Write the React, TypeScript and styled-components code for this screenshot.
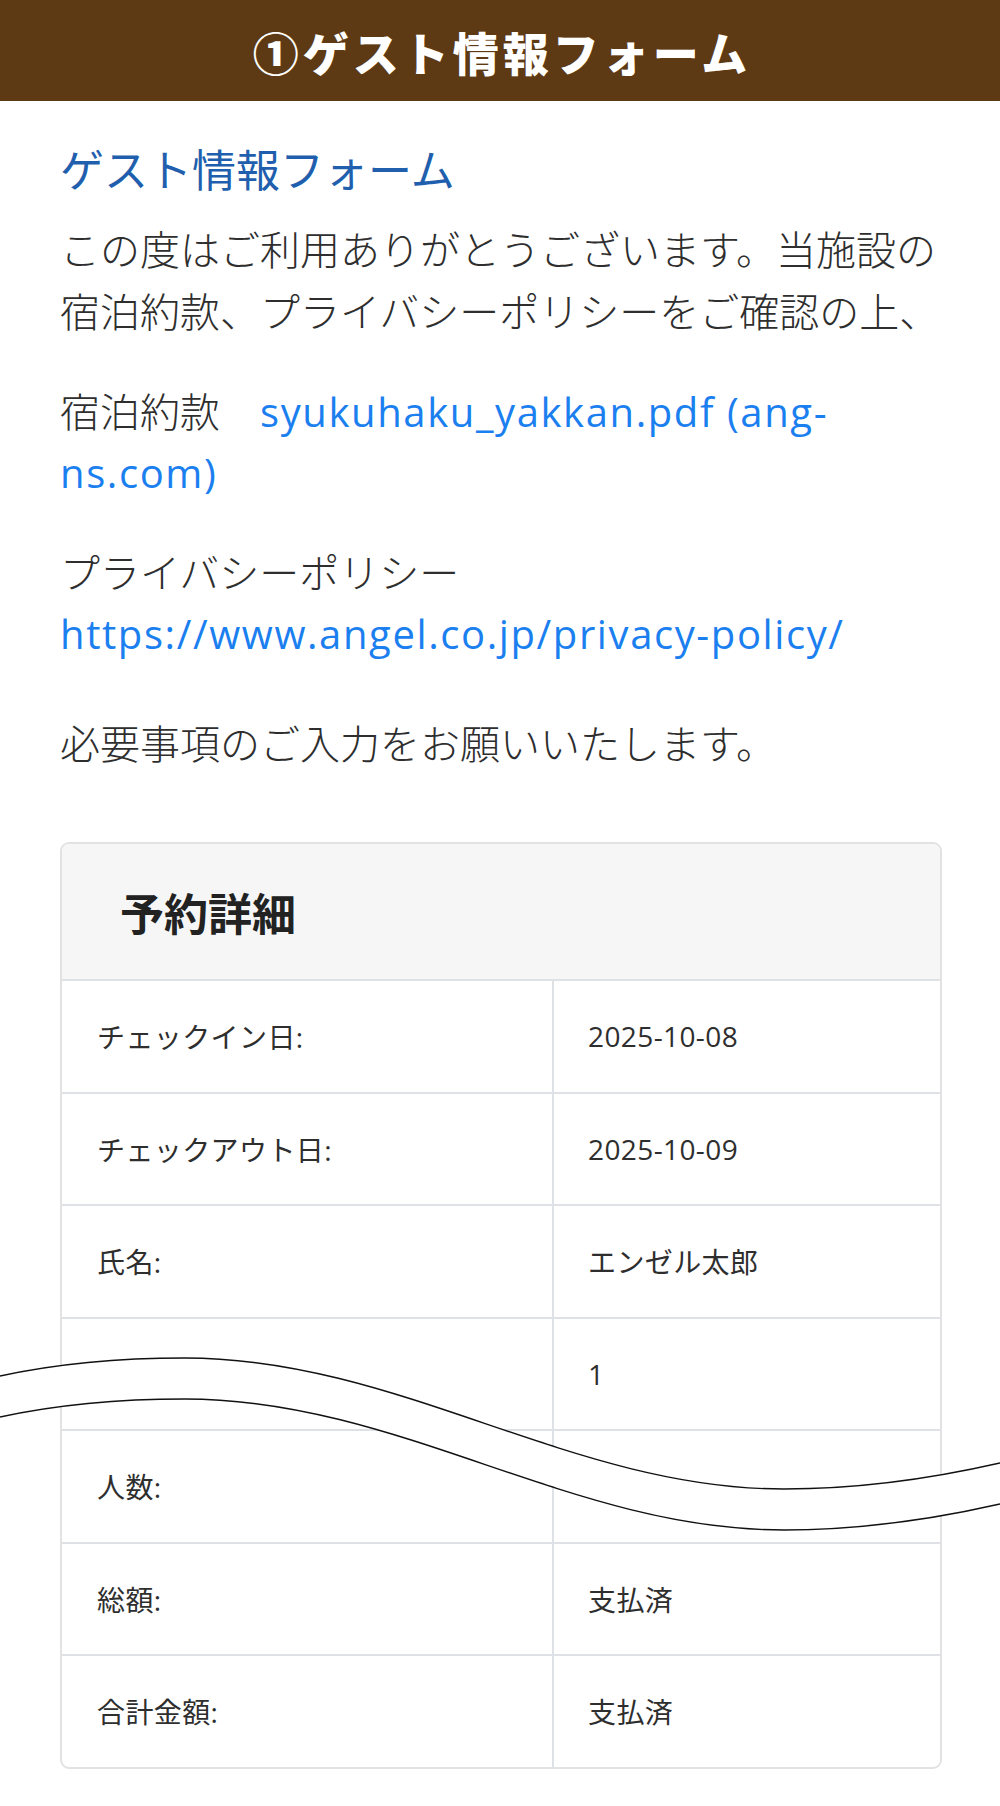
import React from "react";
import styled, { createGlobalStyle } from "styled-components";

const GlobalStyle = createGlobalStyle`
  html, body { margin: 0; padding: 0; background: #ffffff; }
  body {
    font-family: "Open Sans", "Noto Sans CJK JP", sans-serif;
    color: #2e2e2e;
  }
  * { box-sizing: border-box; }
`;

const Page = styled.div`
  position: relative;
  width: 1000px;
  min-height: 1806px;
  overflow: hidden;
  background: #ffffff;
`;

const TitleBar = styled.header`
  height: 101px;
  background: #5e3a14;
  display: flex;
  align-items: center;
  justify-content: center;
`;

const TitleText = styled.h1`
  margin: 0;
  color: #ffffff;
  font-family: "Noto Sans CJK JP", sans-serif;
  font-weight: 900;
  font-size: 46px;
  letter-spacing: 4px;
  line-height: 1;
  padding-left: 4px;
`;

const Content = styled.main`
  padding: 41px 58px 0 60px;
`;

const Heading = styled.h2`
  margin: 0 0 23px;
  font-family: "Noto Sans CJK JP", sans-serif;
  font-weight: 400;
  font-size: 44px;
  line-height: 53px;
  color: #1f5fae;
`;

const Paragraph = styled.p<{ $gap?: number }>`
  margin: 0 0 ${(p) => p.$gap ?? 38}px;
  font-family: "Open Sans", "Noto Sans CJK JP", sans-serif;
  font-weight: 300;
  font-size: 40px;
  line-height: 61px;
  color: #2e2e2e;
`;

const Jp = styled.span`
  font-family: "Noto Sans CJK JP", sans-serif;
  font-weight: 300;
`;

const Link = styled.a`
  color: #1b7ff0;
  text-decoration: none;
  font-family: "Open Sans", sans-serif;
  font-weight: 400;
  letter-spacing: 1.6px;
`;

const Card = styled.section`
  margin-top: 68px;
  border: 2px solid #e2e2e2;
  border-radius: 9px;
  overflow: hidden;
  background: #ffffff;
`;

const CardHeader = styled.div`
  height: 137px;
  background: #f6f6f6;
  border-bottom: 2px solid #dfe2e5;
  display: flex;
  align-items: center;
  padding-left: 58px;
  font-family: "Noto Sans CJK JP", sans-serif;
  font-weight: 700;
  font-size: 44px;
  color: #222222;
`;

const Row = styled.div<{ $last?: boolean }>`
  display: grid;
  grid-template-columns: 490px 1fr;
  height: ${(p) => (p.$last ? "110.5px" : "112.5px")};
  border-bottom: ${(p) => (p.$last ? "none" : "2px solid #dee2e6")};
`;

const Cell = styled.div<{ $value?: boolean }>`
  display: flex;
  align-items: center;
  padding-left: ${(p) => (p.$value ? "34px" : "35px")};
  border-left: ${(p) => (p.$value ? "2px solid #dee2e6" : "none")};
  font-family: "Open Sans", "Noto Sans CJK JP", sans-serif;
  font-weight: 400;
  font-size: 28px;
  color: #2e2e2e;
  letter-spacing: 0.4px;
`;

const WaveMark = styled.svg`
  position: absolute;
  left: 0;
  top: 1341px;
  width: 1000px;
  height: 200px;
  pointer-events: none;
`;

const rows: { label: string; value: string }[] = [
  { label: "チェックイン日:", value: "2025-10-08" },
  { label: "チェックアウト日:", value: "2025-10-09" },
  { label: "氏名:", value: "エンゼル太郎" },
  { label: "", value: "1" },
  { label: "人数:", value: "" },
  { label: "総額:", value: "支払済" },
  { label: "合計金額:", value: "支払済" },
];

const upper = "M0,35 C60,22 120,17 185,17 C400,17 570,148 784,148 C860,148 930,138 1000,122";
const lower = "M0,76 C60,63 120,58 185,58 C400,58 570,189 784,189 C860,189 930,179 1000,163";
const band =
  "M0,35 C60,22 120,17 185,17 C400,17 570,148 784,148 C860,148 930,138 1000,122 L1000,163 C930,179 860,189 784,189 C570,189 400,58 185,58 C120,58 60,63 0,76 Z";

export default function App() {
  return (
    <Page>
      <GlobalStyle />
      <TitleBar>
        <TitleText>①ゲスト情報フォーム</TitleText>
      </TitleBar>
      <Content>
        <Heading>ゲスト情報フォーム</Heading>
        <Paragraph>
          <Jp>この度はご利用ありがとうございます。当施設の宿泊約款、プライバシーポリシーをご確認の上、</Jp>
        </Paragraph>
        <Paragraph>
          <Jp>宿泊約款　</Jp>
          <Link href="#">syukuhaku_yakkan.pdf (ang-ns.com)</Link>
        </Paragraph>
        <Paragraph $gap={48}>
          <Jp>プライバシーポリシー</Jp>
          <br />
          <Link href="#">https://www.angel.co.jp/privacy-policy/</Link>
        </Paragraph>
        <Paragraph $gap={0}>
          <Jp>必要事項のご入力をお願いいたします。</Jp>
        </Paragraph>
        <Card>
          <CardHeader>予約詳細</CardHeader>
          {rows.map((r, i) => (
            <Row key={i} $last={i === rows.length - 1}>
              <Cell>{r.label}</Cell>
              <Cell $value>{r.value}</Cell>
            </Row>
          ))}
        </Card>
      </Content>
      <WaveMark viewBox="0 0 1000 200" aria-hidden="true">
        <path d={band} fill="#ffffff" />
        <path d={upper} fill="none" stroke="#111111" strokeWidth={1.4} />
        <path d={lower} fill="none" stroke="#111111" strokeWidth={1.4} />
      </WaveMark>
    </Page>
  );
}
